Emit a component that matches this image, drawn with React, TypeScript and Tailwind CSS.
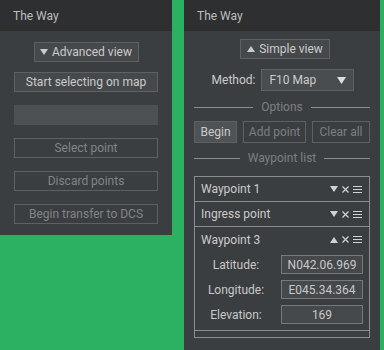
import React from 'react';

const font = { fontFamily: 'Roboto, "Noto Sans", sans-serif' };

function TriDown({ className = '' }: { className?: string }) {
  return (
    <svg width="8" height="6" viewBox="0 0 8 6" className={className}>
      <path d="M0 0H8L4 6Z" fill="currentColor" />
    </svg>
  );
}

function TriUp({ className = '' }: { className?: string }) {
  return (
    <svg width="8" height="6" viewBox="0 0 8 6" className={className}>
      <path d="M0 6H8L4 0Z" fill="currentColor" />
    </svg>
  );
}

function RowIcons({ up }: { up?: boolean }) {
  return (
    <div className="flex items-center gap-[4px] text-[#d2d2d2]">
      {up ? <TriUp /> : <TriDown />}
      <svg width="7" height="7" viewBox="0 0 7 7">
        <path d="M0.5 0.5L6.5 6.5M6.5 0.5L0.5 6.5" stroke="currentColor" strokeWidth="1.2" />
      </svg>
      <svg width="9" height="7" viewBox="0 0 9 7">
        <path d="M0 0.5H9M0 3.5H9M0 6.5H9" stroke="currentColor" strokeWidth="1" />
      </svg>
    </div>
  );
}

function Header() {
  return (
    <div className="h-[31px] bg-[#2e2f31] px-[13px] flex items-center text-[12px] text-[#bdbdbd]">
      The Way
    </div>
  );
}

function Divider({ label }: { label: string }) {
  return (
    <div className="flex items-center gap-[8px] h-[14px]">
      <div className="flex-1 h-px bg-[#8a8c8e]" />
      <span className="text-[#7b7e81]">{label}</span>
      <div className="flex-1 h-px bg-[#8a8c8e]" />
    </div>
  );
}

function Field({ label, value }: { label: string; value: string }) {
  return (
    <div className="flex items-center">
      <span className="w-[70px] text-center text-[#c8c8c8]">{label}</span>
      <div className="ml-[10px] w-[82px] h-[19px] border border-[#76797c] bg-[#46494c] flex items-center justify-center text-[#c8c8c8]">
        {value}
      </div>
    </div>
  );
}

export default function App() {
  const btn = 'h-[20px] border border-[#5e6164] flex items-center justify-center';
  return (
    <div className="w-[384px] h-[350px] bg-[#2bb161] flex items-start gap-[12px] text-[12px]" style={font}>
      {/* Simple panel */}
      <div className="w-[172px] bg-[#3b3e41] pb-[11px]">
        <Header />
        <div className="px-[14px] pt-[11px] flex flex-col">
          <div className="flex justify-center">
            <div className={`${btn} w-[105px] bg-[#46494c] text-[#cbcbcb] gap-[3px]`}>
              <TriDown className="mr-[1px]" />
              Advanced view
            </div>
          </div>
          <div className={`${btn} mt-[10px] bg-[#46494c] text-[#cbcbcb]`}>Start selecting on map</div>
          <div className="mt-[13px] h-[20px] bg-[#4e5154]" />
          <div className={`${btn} mt-[13px] text-[#818487]`}>Select point</div>
          <div className={`${btn} mt-[13px] text-[#818487]`}>Discard points</div>
          <div className={`${btn} mt-[13px] text-[#818487]`}>Begin transfer to DCS</div>
        </div>
      </div>

      {/* Advanced panel */}
      <div className="w-[196px] h-[350px] bg-[#3b3e41]">
        <Header />
        <div className="px-[10px] pt-[8px] flex flex-col">
          <div className="flex justify-center pl-[6px]">
            <div className={`${btn} w-[90px] bg-[#46494c] text-[#cbcbcb] gap-[4px]`}>
              <TriUp />
              Simple view
            </div>
          </div>
          <div className="mt-[10px] flex items-center justify-center gap-[6px] pl-[2px]">
            <span className="text-[#cbcbcb]">Method:</span>
            <div className="w-[93px] h-[22px] border border-[#5e6164] bg-[#4a4d50] flex items-center justify-between pl-[7px] pr-[7px] text-[#cbcbcb]">
              F10 Map
              <svg width="9" height="7" viewBox="0 0 9 7">
                <path d="M0 0H9L4.5 7Z" fill="#dedede" />
              </svg>
            </div>
          </div>
          <div className="mt-[9px]">
            <Divider label="Options" />
          </div>
          <div className="mt-[7px] flex gap-[6px]">
            <div className="h-[22px] w-[43px] border border-[#5e6164] bg-[#505356] text-[#cbcbcb] flex items-center justify-center">
              Begin
            </div>
            <div className="h-[22px] w-[63px] border border-[#5e6164] text-[#7b7e81] flex items-center justify-center">
              Add point
            </div>
            <div className="h-[22px] w-[58px] border border-[#5e6164] text-[#7b7e81] flex items-center justify-center">
              Clear all
            </div>
          </div>
          <div className="mt-[8px]">
            <Divider label="Waypoint list" />
          </div>
          <div className="mt-[11px] border border-[#8a8c8e] pb-[6px]">
            <div className="h-[25px] border-b border-[#8a8c8e] flex items-center justify-between pl-[6px] pr-[7px] text-[#cbcbcb]">
              Waypoint 1
              <RowIcons />
            </div>
            <div className="h-[25px] border-b border-[#8a8c8e] flex items-center justify-between pl-[6px] pr-[7px] text-[#cbcbcb]">
              Ingress point
              <RowIcons />
            </div>
            <div className="border-b border-[#8a8c8e] pb-[6px]">
              <div className="h-[25px] flex items-center justify-between pl-[6px] pr-[7px] text-[#cbcbcb]">
                Waypoint 3
                <RowIcons up />
              </div>
              <div className="pl-[6px] pt-[3px] flex flex-col gap-[6px]">
                <Field label="Latitude:" value="N042.06.969" />
                <Field label="Longitude:" value="E045.34.364" />
                <Field label="Elevation:" value="169" />
              </div>
            </div>
          </div>
        </div>
      </div>
    </div>
  );
}
